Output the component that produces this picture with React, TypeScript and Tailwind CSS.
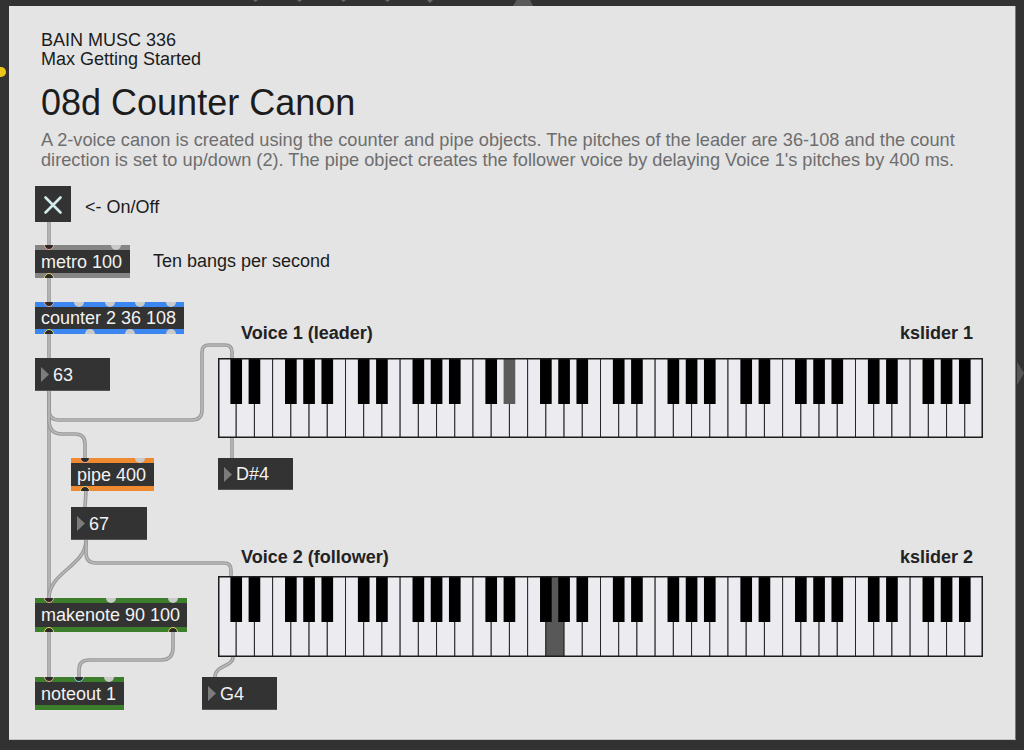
import React from "react";

type PortKind = "in" | "out" | "blue" | "free";

function Port({ at, kind, edge }: { at: string; kind: PortKind; edge: "top" | "bottom" }) {
  const look =
    kind === "free"
      ? "bg-[#cacaca]"
      : kind === "in"
        ? "bg-[#2a2a2a] border border-[#eea591]"
        : kind === "blue"
          ? "bg-[#2a2a2a] border border-[#8fcbea]"
          : "bg-[#2a2a2a] border border-[#e7d45e]";
  const y = edge === "top" ? "top-[-5px]" : "bottom-[-5px]";
  return <span className={`absolute ${at} ${y} h-[10px] w-[10px] rounded-full ${look}`} />;
}

function MaxObject({
  pos,
  strip,
  text,
  children,
}: {
  pos: string;
  strip: string;
  text: string;
  children?: React.ReactNode;
}) {
  return (
    <div className={`absolute ${pos} flex flex-col overflow-hidden`}>
      <div className={`h-[5px] shrink-0 ${strip}`} />
      <div className="flex flex-1 items-center bg-[#333333] px-[6px] text-[18px] leading-none whitespace-nowrap text-[#f2f2f2]">
        {text}
      </div>
      <div className={`h-[5px] shrink-0 ${strip}`} />
      {children}
    </div>
  );
}

function NumberBox({ pos, value }: { pos: string; value: string }) {
  return (
    <div className={`absolute ${pos} flex items-center bg-[#333333] pl-[6px] shadow-[inset_0_-1px_0_#555555]`}>
      <svg width="8" height="15" viewBox="0 0 8 15" className="shrink-0">
        <polygon points="0,0 8,7.5 0,15" fill="#7c7c7c" />
      </svg>
      <span className="ml-[4px] text-[18px] leading-none text-[#f2f2f2]">{value}</span>
    </div>
  );
}

// kslider: 6 octaves from C (note 36), 42 white keys
function Keyboard({ pos, active, h }: { pos: string; active: number; h: number }) {
  const w = 765;
  const kw = w / 42;
  const whiteSteps = [0, 2, 4, 5, 7, 9, 11];
  const blackSteps = [1, 3, 6, 8, 10];
  const blackAt = [1, 2, 4, 5, 6];
  const whites: React.ReactNode[] = [];
  const blacks: React.ReactNode[] = [];
  for (let o = 0; o < 6; o++) {
    whiteSteps.forEach((s, i) => {
      const note = 36 + o * 12 + s;
      const x = (o * 7 + i) * kw;
      whites.push(
        <rect
          key={`w${note}`}
          x={x}
          y={0}
          width={kw}
          height={h}
          fill={note === active ? "#585858" : "#ebebf0"}
          stroke="#262626"
          strokeWidth={1}
        />
      );
    });
    blackSteps.forEach((s, i) => {
      const note = 36 + o * 12 + s;
      const cx = (o * 7 + blackAt[i]) * kw;
      blacks.push(
        <rect
          key={`b${note}`}
          x={cx - kw * 0.32}
          y={0}
          width={kw * 0.64}
          height={46}
          fill={note === active ? "#5b5b5b" : "#000000"}
        />
      );
    });
  }
  return (
    <svg className={`absolute ${pos}`} width={w} height={h} viewBox={`0 0 ${w} ${h}`}>
      {whites}
      {blacks}
      <rect x={0.75} y={0.75} width={w - 1.5} height={h - 1.5} fill="none" stroke="#1c1c1c" strokeWidth={1.5} />
    </svg>
  );
}

function Cord({ d }: { d: string }) {
  return (
    <g fill="none" strokeLinecap="round">
      <path d={d} stroke="#979797" strokeWidth={3.6} />
      <path d={d} stroke="#b9b9b9" strokeWidth={1.6} />
    </g>
  );
}

const cords = [
  "M40 216 L40 239",
  "M40 272 L40 296",
  "M40 328 L40 352",
  "M40 385 L40 592",
  "M40 385 L40 404 Q40 414 50 414 L183 414 Q193 414 193 404 L193 346 Q193 339 200 339 L216 339 Q223 339 223 346 L223 352",
  "M40 385 L40 414 Q40 428 53 428 L66 428 Q76 428 76 438 L76 452",
  "M223 432 L223 452",
  "M77 485 L76 501",
  "M77 534 C77 560 40 566 40 592",
  "M77 534 L77 547 Q77 557 87 557 L215 557 Q222 557 222 564 L222 570",
  "M40 626 L40 671",
  "M164 626 L164 642 Q164 654 152 654 L80 654 Q70 654 70 664 L70 671",
  "M224 651 C224 661 206 659 206 671",
];

export default function App() {
  return (
    <div className="relative h-[750px] w-[1024px] overflow-hidden bg-[#323232] pl-[9px] pt-[6px] font-['Liberation_Sans',Arial,sans-serif]">
      {/* window chrome bits */}
      <svg className="absolute left-0 top-0" width="1024" height="750">
        <polygon points="253,0 258,0 255.5,2" fill="#6a6a6a" />
        <polygon points="297,0 302,0 299.5,2" fill="#6a6a6a" />
        <polygon points="341,0 346,0 343.5,2" fill="#6a6a6a" />
        <polygon points="385,0 390,0 387.5,2" fill="#6a6a6a" />
        <polygon points="427,0 433,0 430,3" fill="#6a6a6a" />
        <polygon points="516.5,0 530,0 533,6 513,6" fill="#5a5a5a" />
        <polygon points="1017,362 1024,373 1017,385" fill="#555555" />
      </svg>
      <div className="absolute left-[-4px] top-[67px] h-[10px] w-[10px] rounded-full bg-[#e9c619]" />

      <div className="relative h-[734px] w-[1007px] border-r border-b border-r-[#7a7a7a] border-b-[#c4c4c4] bg-[#e4e4e4]">
        <svg className="absolute left-0 top-0" width="1007" height="734">
          {cords.map((d, i) => (
            <Cord key={i} d={d} />
          ))}
        </svg>

        <div className="relative pl-[32px] pt-[25px]">
          <div className="text-[18px] leading-[19px] text-[#1c1c1c]">
            BAIN MUSC 336
            <br />
            Max Getting Started
          </div>
          <h1 className="mt-[14px] text-[36px] leading-[40px] text-[#1c1c1c]">08d Counter Canon</h1>
          <p className="mt-[7px] text-[18.2px] leading-[20px] text-[#6e6e6e]">
            A 2-voice canon is created using the counter and pipe objects. The pitches of the leader are 36-108 and the count
            <br />
            direction is set to up/down (2). The pipe object creates the follower voice by delaying Voice 1's pitches by 400 ms.
          </p>
        </div>

        {/* toggle */}
        <div className="absolute left-[26px] top-[180px] h-[36px] w-[36px] bg-[#333333]">
          <svg width="36" height="36" viewBox="0 0 36 36">
            <path d="M10.5 11.5 L25.5 26.5 M25.5 11.5 L10.5 26.5" stroke="#d3ecec" strokeWidth={2.6} strokeLinecap="round" />
          </svg>
        </div>
        <div className="absolute left-[76px] top-[191px] text-[18px] leading-[20px] text-[#1c1c1c]">&lt;- On/Off</div>

        <MaxObject pos="left-[26px] top-[239px] h-[33px] w-[95px]" strip="bg-[#858585]" text="metro 100">
          <Port at="left-[9px]" kind="in" edge="top" />
          <Port at="right-[9px]" kind="free" edge="top" />
          <Port at="left-[9px]" kind="out" edge="bottom" />
        </MaxObject>
        <div className="absolute left-[144px] top-[245px] text-[18px] leading-[20px] text-[#1c1c1c]">Ten bangs per second</div>

        <MaxObject pos="left-[26px] top-[296px] h-[32px] w-[149px]" strip="bg-[#3b86f1]" text="counter 2 36 108">
          <Port at="left-[9px]" kind="in" edge="top" />
          <Port at="left-[39px]" kind="free" edge="top" />
          <Port at="left-[70px]" kind="free" edge="top" />
          <Port at="left-[100px]" kind="free" edge="top" />
          <Port at="left-[131px]" kind="free" edge="top" />
          <Port at="left-[9px]" kind="out" edge="bottom" />
          <Port at="left-[50px]" kind="free" edge="bottom" />
          <Port at="left-[90px]" kind="free" edge="bottom" />
          <Port at="left-[131px]" kind="free" edge="bottom" />
        </MaxObject>

        <NumberBox pos="left-[26px] top-[352px] h-[33px] w-[75px]" value="63" />

        <div className="absolute left-[232px] top-[317px] flex w-[732px] justify-between text-[18px] leading-[20px] font-bold text-[#222222]">
          <span>Voice 1 (leader)</span>
          <span>kslider 1</span>
        </div>
        <Keyboard pos="left-[209px] top-[352px]" active={63} h={80} />

        <MaxObject pos="left-[62px] top-[452px] h-[33px] w-[83px]" strip="bg-[#f08a31]" text="pipe 400">
          <Port at="left-[9px]" kind="in" edge="top" />
          <Port at="right-[9px]" kind="free" edge="top" />
          <Port at="left-[9px]" kind="out" edge="bottom" />
        </MaxObject>

        <NumberBox pos="left-[209px] top-[452px] h-[32px] w-[75px]" value="D#4" />
        <NumberBox pos="left-[62px] top-[501px] h-[33px] w-[76px]" value="67" />

        <div className="absolute left-[232px] top-[541px] flex w-[732px] justify-between text-[18px] leading-[20px] font-bold text-[#222222]">
          <span>Voice 2 (follower)</span>
          <span>kslider 2</span>
        </div>
        <Keyboard pos="left-[209px] top-[570px]" active={67} h={81} />

        <MaxObject pos="left-[26px] top-[592px] h-[34px] w-[152px]" strip="bg-[#3c7e2b]" text="makenote 90 100">
          <Port at="left-[9px]" kind="in" edge="top" />
          <Port at="left-[71px]" kind="free" edge="top" />
          <Port at="left-[133px]" kind="free" edge="top" />
          <Port at="left-[9px]" kind="out" edge="bottom" />
          <Port at="left-[133px]" kind="out" edge="bottom" />
        </MaxObject>

        <MaxObject pos="left-[26px] top-[671px] h-[33px] w-[89px]" strip="bg-[#3c7e2b]" text="noteout 1">
          <Port at="left-[9px]" kind="in" edge="top" />
          <Port at="left-[39px]" kind="blue" edge="top" />
          <Port at="left-[69px]" kind="free" edge="top" />
        </MaxObject>

        <NumberBox pos="left-[193px] top-[671px] h-[33px] w-[75px]" value="G4" />
      </div>
    </div>
  );
}
